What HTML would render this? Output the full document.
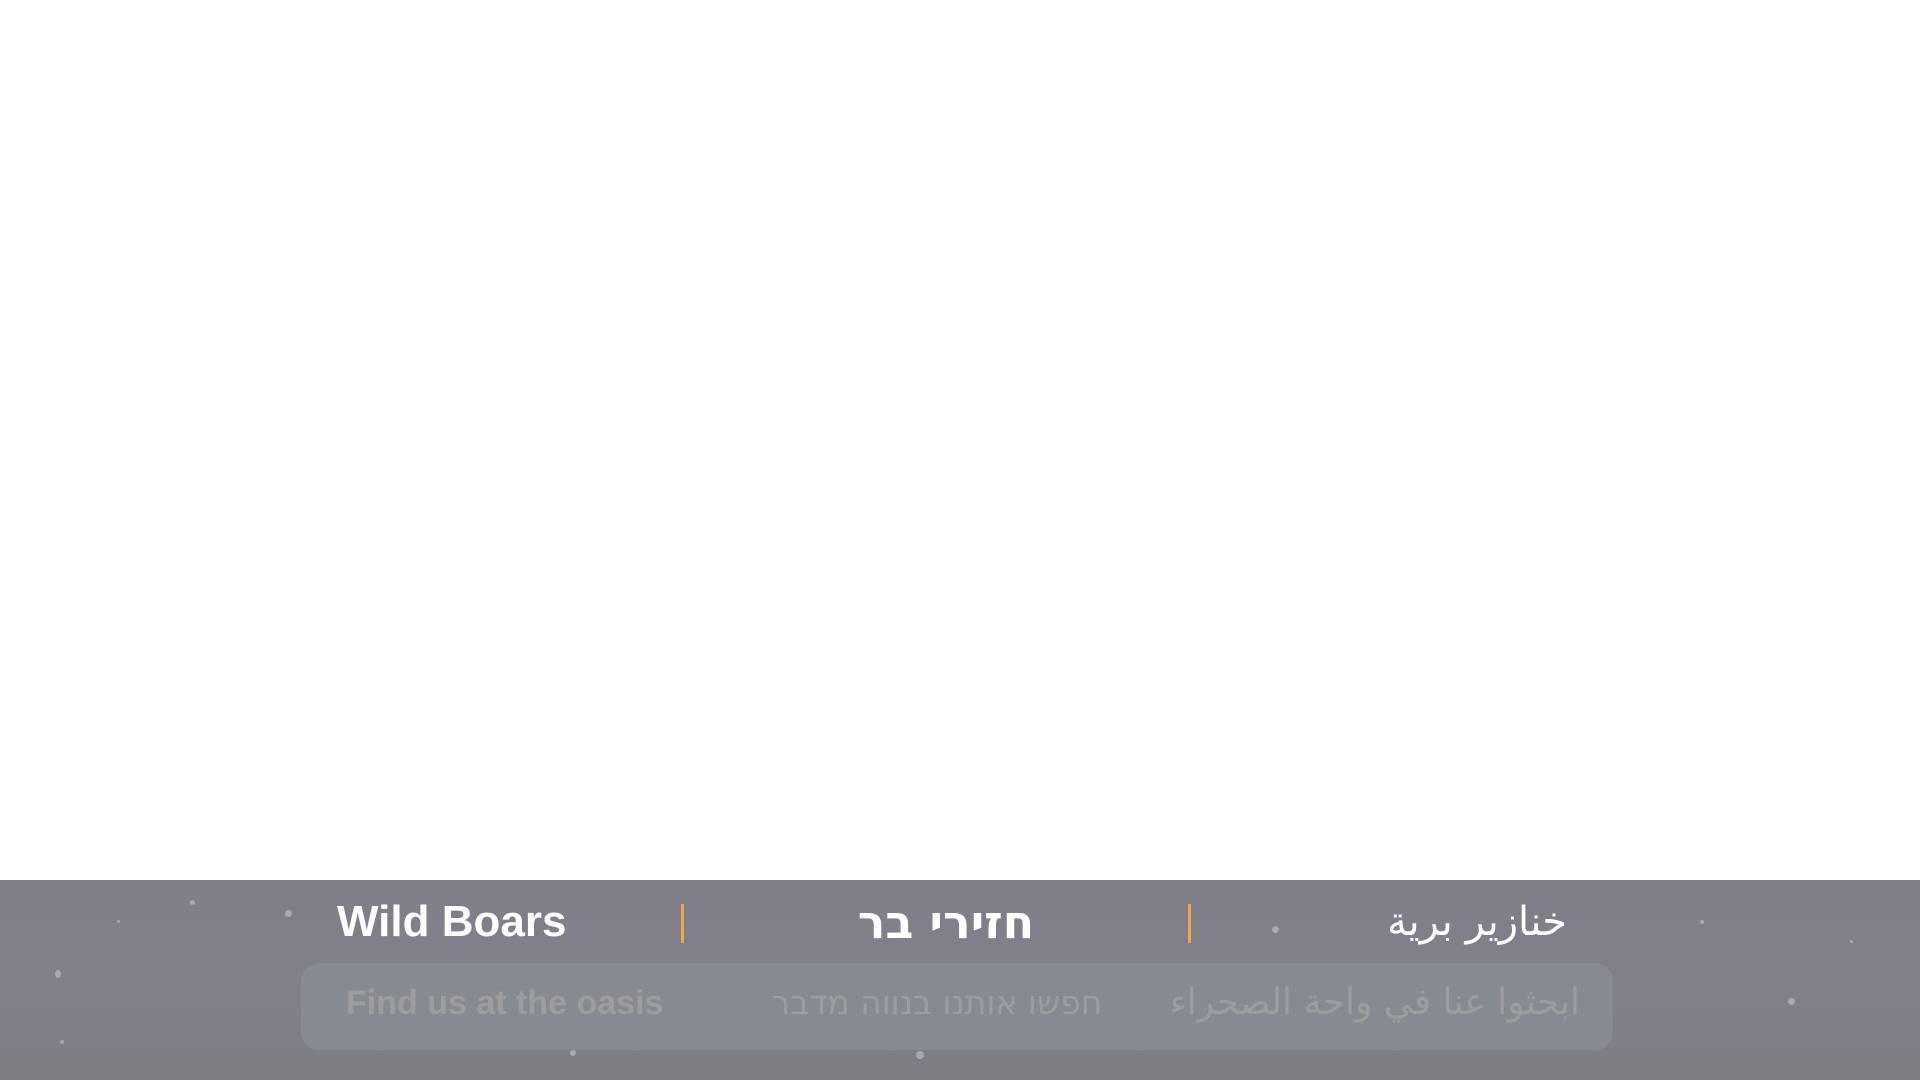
<!DOCTYPE html>
<html><head><meta charset="utf-8">
<style>
html,body{margin:0;padding:0;width:1920px;height:1080px;overflow:hidden;background:#fff;}
.bar{position:absolute;left:0;top:880px;width:1920px;height:200px;
 background:linear-gradient(180deg,#7f7f89 0%,#80808a 50%,#7e7e84 100%);}
.t{position:absolute;top:896px;height:52px;line-height:52px;color:#fff;font-weight:bold;font-size:44px;white-space:nowrap;
 font-family:"Liberation Sans","DejaVu Sans",sans-serif;}
.sep{position:absolute;top:904px;width:3px;height:39px;background:#f5a54e;}
.pill{position:absolute;left:301px;top:963px;width:1312px;height:87px;border-radius:18px;background:#868b92;}
.s{position:absolute;top:980px;height:46px;line-height:46px;color:#9d9d9f;font-weight:bold;font-size:34px;white-space:nowrap;
 font-family:"Liberation Sans","DejaVu Sans",sans-serif;}
.dot{position:absolute;border-radius:50%;background:rgba(220,220,235,0.45);}
</style></head><body>
<div class="bar">
<div class="dot" style="left:190px;top:20px;width:5px;height:5px"></div>
<div class="dot" style="left:55px;top:90px;width:6px;height:8px"></div>
<div class="dot" style="left:117px;top:40px;width:3px;height:3px"></div>
<div class="dot" style="left:285px;top:30px;width:7px;height:7px"></div>
<div class="dot" style="left:60px;top:160px;width:4px;height:4px"></div>
<div class="dot" style="left:1272px;top:46px;width:7px;height:7px"></div>
<div class="dot" style="left:1788px;top:118px;width:7px;height:7px"></div>
<div class="dot" style="left:1600px;top:104px;width:6px;height:6px"></div>
<div class="dot" style="left:916px;top:171px;width:8px;height:8px"></div>
<div class="dot" style="left:570px;top:170px;width:6px;height:6px"></div>
<div class="dot" style="left:1700px;top:40px;width:4px;height:4px"></div>
<div class="dot" style="left:1850px;top:60px;width:3px;height:3px"></div>
</div>
<div class="t" style="left:337px;">Wild Boars</div>
<div class="sep" style="left:681px"></div>
<div class="t" style="left:846px;width:200px;text-align:center;font-family:'DejaVu Sans',sans-serif;font-weight:bold;font-size:46px;" dir="rtl">חזירי בר</div>
<div class="sep" style="left:1188px"></div>
<div class="t" style="left:1350px;width:217px;text-align:right;font-family:'DejaVu Sans',sans-serif;font-weight:normal;font-size:40px;" dir="rtl">خنازير برية</div>
<div class="pill"></div>
<div class="s" style="left:346px;">Find us at the oasis</div>
<div class="s" style="left:763px;width:348px;text-align:center;font-family:'DejaVu Sans',sans-serif;font-weight:normal;font-size:33px;" dir="rtl">חפשו אותנו בנווה מדבר</div>
<div class="s" style="left:1150px;width:430px;text-align:right;font-family:'DejaVu Sans',sans-serif;font-weight:normal;font-size:36px;" dir="rtl">ابحثوا عنا في واحة الصحراء</div>
</body></html>
